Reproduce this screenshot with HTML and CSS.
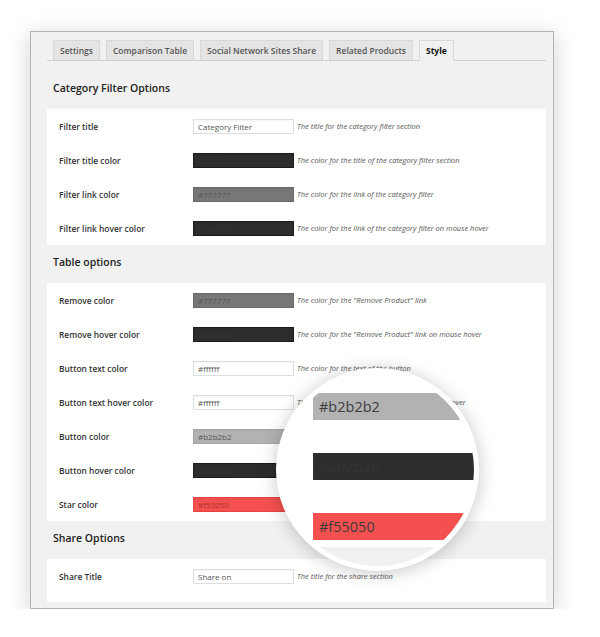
FILE: index.html
```html
<!DOCTYPE html>
<html>
	<head>
		<meta charset="utf-8" />
		<title>Style</title>
		<link rel="stylesheet" href="styles.css">
	</head>
	<body>
		<div class="panel">
			<div class="tabs">
				<div class="tab">Settings</div>
				<div class="tab">Comparison Table</div>
				<div class="tab">Social Network Sites Share</div>
				<div class="tab">Related Products</div>
				<div class="tab active">Style</div>
			</div>

			<h3 class="group-title first">Category Filter Options</h3>
			<div class="group">
				<div class="row"><div class="label">Filter title</div><div class="field">Category Filter</div><div class="desc">The title for the category filter section</div></div>
				<div class="row"><div class="label">Filter title color</div><div class="field dark">#2b2b2b</div><div class="desc">The color for the title of the category filter section</div></div>
				<div class="row"><div class="label">Filter link color</div><div class="field grey">#777777</div><div class="desc">The color for the link of the category filter</div></div>
				<div class="row"><div class="label">Filter link hover color</div><div class="field dark">#2b2b2b</div><div class="desc">The color for the link of the category filter on mouse hover</div></div>
			</div>

			<h3 class="group-title">Table options</h3>
			<div class="group">
				<div class="row"><div class="label">Remove color</div><div class="field grey">#777777</div><div class="desc">The color for the "Remove Product" link</div></div>
				<div class="row"><div class="label">Remove hover color</div><div class="field dark">#2b2b2b</div><div class="desc">The color for the "Remove Product" link on mouse hover</div></div>
				<div class="row"><div class="label">Button text color</div><div class="field">#ffffff</div><div class="desc">The color for the text of the button</div></div>
				<div class="row"><div class="label">Button text hover color</div><div class="field">#ffffff</div><div class="desc">The color for the text of the button on mouse hover</div></div>
				<!-- descriptions of the next rows sit under the lens -->
				<div class="row"><div class="label">Button color</div><div class="field light">#b2b2b2</div></div>
				<div class="row"><div class="label">Button hover color</div><div class="field dark">#2b2b2b</div></div>
				<div class="row"><div class="label">Star color</div><div class="field red">#f55050</div></div>
			</div>

			<h3 class="group-title">Share Options</h3>
			<div class="group last">
				<div class="row"><div class="label">Share Title</div><div class="field">Share on</div><div class="desc">The title for the share section</div></div>
			</div>

			<!-- magnifier over the colour fields -->
			<div class="lens">
				<div class="lens-white">
					<div class="big light">#b2b2b2</div>
					<div class="big dark">#2b2b2b</div>
					<div class="big red">#f55050</div>
				</div>
				<div class="lens-grey"></div>
			</div>
		</div>
	</body>
</html>
```

FILE: styles.css
```css
body{
	margin:0;
	background:#fff;
	font-family:"Open Sans", "Liberation Sans", sans-serif;
}
.panel{
	position:relative;
	box-sizing:border-box;
	width:524px;
	margin:31px 0 0 30px;
	padding:8px 7px 6px 16px;
	background:#f1f1f1;
	border:1px solid #b4b4b4;
	box-shadow:0 4px 22px rgba(0,0,0,0.18);
}

/* tabs */
.tabs{
	display:flex;
	align-items:flex-end;
	gap:6px;
	height:20px;
	padding-left:6px;
	border-bottom:1px solid #d0d0d0;
}
.tab{
	box-sizing:border-box;
	height:21px;
	margin-bottom:-1px;
	padding:0 6px;
	line-height:19px;
	font-size:8.5px;
	font-weight:600;
	color:#555;
	background:#e4e4e4;
	border:1px solid #d8d8d8;
	border-bottom-color:#d0d0d0;
}
.tab.active{
	background:#f1f1f1;
	color:#111;
	font-weight:700;
	border-bottom-color:#f1f1f1;
}

/* groups */
.group-title{
	margin:0;
	padding:10px 0 14px 6px;
	line-height:14px;
	font-size:10.5px;
	font-weight:600;
	color:#222;
}
.group-title.first{
	padding-top:20px;
}
.group{
	background:#fff;
}
.group.last{
	padding-bottom:9px;
}
.row{
	display:flex;
	align-items:center;
	height:34px;
	padding-left:12px;
	white-space:nowrap;
}
.label{
	width:134px;
	font-size:8.4px;
	font-weight:600;
	color:#333;
}
.field{
	box-sizing:border-box;
	width:101px;
	height:15px;
	padding-left:4px;
	line-height:13px;
	font-size:8px;
	color:#555;
	background:#fff;
	border:1px solid #dedede;
	box-shadow:inset 0 1px 1px rgba(0,0,0,0.04);
}
.field.dark{
	background:#2d2d2d;
	border-color:#1c1c1c;
	color:#333;
}
.field.grey{
	background:#777;
	border-color:#6a6a6a;
	color:#555;
}
.field.light{
	background:#b2b2b2;
	border-color:#a6a6a6;
	color:#555;
}
.field.red{
	background:#f55050;
	border-color:#e54444;
	color:#a33;
}
.desc{
	margin-left:3px;
	font-size:7.5px;
	font-style:italic;
	color:#555;
}

/* lens */
.lens{
	position:absolute;
	left:245px;
	top:336px;
	box-sizing:border-box;
	width:203px;
	height:203px;
	border-radius:50%;
	border:5px solid #fff;
	overflow:hidden;
	background:#fff;
	box-shadow:0 2px 18px rgba(0,0,0,0.22);
}
.lens-white{
	padding:20px 0 7px 32px;
	background:#fff;
}
.big{
	width:300px;
	height:27px;
	margin-bottom:33px;
	padding-left:6px;
	line-height:27px;
	font-size:14.5px;
	color:#3c3c3c;
}
.big.red{
	margin-bottom:0;
	background:#f55050;
}
.big.light{
	background:#b2b2b2;
}
.big.dark{
	background:#2d2d2d;
	color:#333;
}
.lens-grey{
	height:120px;
	background:#f1f1f1;
}
```
